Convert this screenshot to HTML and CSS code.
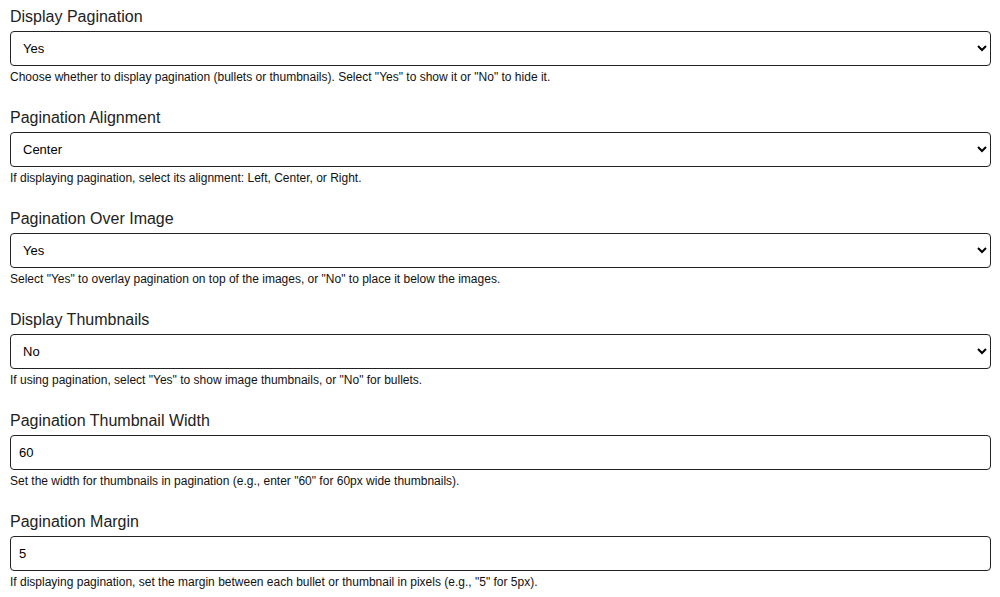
FILE: index.html
```html
<!DOCTYPE html>
<html>
<head>
<meta charset="utf-8">
<link rel="stylesheet" href="styles.css">
</head>
<body>
<div class="form">
  <div class="field">
    <label class="label">Display Pagination</label>
    <select class="control select"><option>Yes</option><option>No</option></select>
    <p class="help">Choose whether to display pagination (bullets or thumbnails). Select "Yes" to show it or "No" to hide it.</p>
  </div>
  <div class="field">
    <label class="label">Pagination Alignment</label>
    <select class="control select"><option>Left</option><option selected>Center</option><option>Right</option></select>
    <p class="help">If displaying pagination, select its alignment: Left, Center, or Right.</p>
  </div>
  <div class="field">
    <label class="label">Pagination Over Image</label>
    <select class="control select"><option>Yes</option><option>No</option></select>
    <p class="help">Select "Yes" to overlay pagination on top of the images, or "No" to place it below the images.</p>
  </div>
  <div class="field">
    <label class="label">Display Thumbnails</label>
    <select class="control select"><option>Yes</option><option selected>No</option></select>
    <p class="help">If using pagination, select "Yes" to show image thumbnails, or "No" for bullets.</p>
  </div>
  <div class="field">
    <label class="label">Pagination Thumbnail Width</label>
    <input class="control input" type="text" value="60">
    <p class="help">Set the width for thumbnails in pagination (e.g., enter "60" for 60px wide thumbnails).</p>
  </div>
  <div class="field">
    <label class="label">Pagination Margin</label>
    <input class="control input" type="text" value="5">
    <p class="help">If displaying pagination, set the margin between each bullet or thumbnail in pixels (e.g., "5" for 5px).</p>
  </div>
</div>
</body>
</html>
```
FILE: styles.css
```css
html, body {
  margin: 0;
  padding: 0;
  background: #fff;
}
body {
  font-family: Arial, "Liberation Sans", sans-serif;
  color: #222;
}
.form {
  padding: 8px 9px 0 10px;
  display: flex;
  flex-direction: column;
}
.field {
  display: flex;
  flex-direction: column;
  margin-bottom: 25px;
}
.label {
  font-size: 16px;
  line-height: 18px;
  margin-bottom: 5px;
  color: #222;
}
.control {
  box-sizing: border-box;
  width: 100%;
  height: 35px;
  border: 1px solid #222;
  border-radius: 4px;
  background: #fff;
  font-family: Arial, "Liberation Sans", sans-serif;
  font-size: 13px;
  color: #000;
  margin: 0;
}
.select {
  padding: 0 8px;
}
.input {
  padding: 0 8px;
}
.help {
  margin: 4px 0 0;
  font-size: 12px;
  line-height: 14px;
  color: #111;
}
```
